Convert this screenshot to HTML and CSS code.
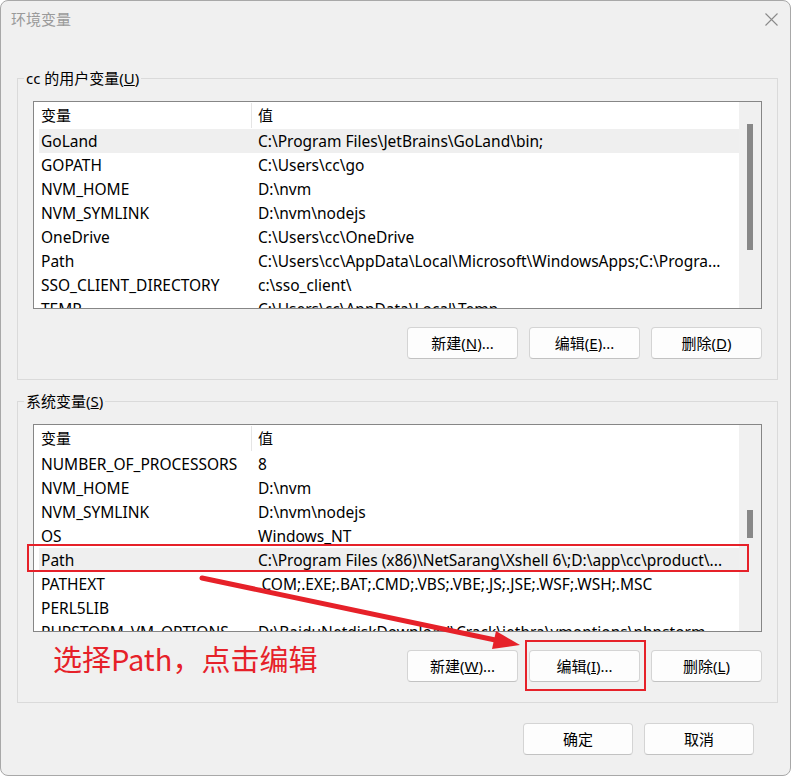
FILE: index.html
```
<!DOCTYPE html>
<html lang="zh-CN">
<head>
<meta charset="utf-8">
<title>环境变量</title>
<link rel="stylesheet" href="styles.css">
</head>
<body>
<div class="window">
  <div class="titlebar">
    <span class="title">环境变量</span>
    <svg class="close" width="13" height="13" viewBox="0 0 13 13"><path d="M0.5 0.5 L12.5 12.5 M12.5 0.5 L0.5 12.5" stroke="#8a8a8a" stroke-width="1.1" fill="none"/></svg>
  </div>
  <div class="content">
    <fieldset class="group">
      <legend>cc 的用户变量(<u>U</u>)</legend>
      <div class="list">
        <div class="table">
          <div class="row head"><div class="c1">变量</div><div class="c2">值</div></div>
          <div class="row sel"><div class="c1">GoLand</div><div class="c2">C:\Program Files\JetBrains\GoLand\bin;</div></div>
          <div class="row"><div class="c1">GOPATH</div><div class="c2">C:\Users\cc\go</div></div>
          <div class="row"><div class="c1">NVM_HOME</div><div class="c2">D:\nvm</div></div>
          <div class="row"><div class="c1">NVM_SYMLINK</div><div class="c2">D:\nvm\nodejs</div></div>
          <div class="row"><div class="c1">OneDrive</div><div class="c2">C:\Users\cc\OneDrive</div></div>
          <div class="row"><div class="c1">Path</div><div class="c2">C:\Users\cc\AppData\Local\Microsoft\WindowsApps;C:\Progra...</div></div>
          <div class="row"><div class="c1">SSO_CLIENT_DIRECTORY</div><div class="c2">c:\sso_client\</div></div>
          <div class="row"><div class="c1">TEMP</div><div class="c2">C:\Users\cc\AppData\Local\Temp</div></div>
        </div>
        <div class="scroll"><div class="thumb" style="margin-top:22px;height:126px"></div></div>
      </div>
      <div class="buttons">
        <button class="btn">新建(<u>N</u>)...</button>
        <button class="btn">编辑(<u>E</u>)...</button>
        <button class="btn">删除(<u>D</u>)</button>
      </div>
    </fieldset>

    <fieldset class="group sys">
      <legend>系统变量(<u>S</u>)</legend>
      <div class="list">
        <div class="table">
          <div class="row head"><div class="c1">变量</div><div class="c2">值</div></div>
          <div class="row"><div class="c1">NUMBER_OF_PROCESSORS</div><div class="c2">8</div></div>
          <div class="row"><div class="c1">NVM_HOME</div><div class="c2">D:\nvm</div></div>
          <div class="row"><div class="c1">NVM_SYMLINK</div><div class="c2">D:\nvm\nodejs</div></div>
          <div class="row"><div class="c1">OS</div><div class="c2">Windows_NT</div></div>
          <div class="row sel"><div class="c1">Path</div><div class="c2">C:\Program Files (x86)\NetSarang\Xshell 6\;D:\app\cc\product\...</div></div>
          <div class="row"><div class="c1">PATHEXT</div><div class="c2">.COM;.EXE;.BAT;.CMD;.VBS;.VBE;.JS;.JSE;.WSF;.WSH;.MSC</div></div>
          <div class="row"><div class="c1">PERL5LIB</div><div class="c2"></div></div>
          <div class="row"><div class="c1">PHPSTORM_VM_OPTIONS</div><div class="c2">D:\BaiduNetdiskDownload\Crack\jetbra\vmoptions\phpstorm</div></div>
        </div>
        <div class="scroll"><div class="thumb" style="margin-top:85px;height:28px"></div></div>
      </div>
      <div class="buttons">
        <button class="btn">新建(<u>W</u>)...</button>
        <button class="btn">编辑(<u>I</u>)...</button>
        <button class="btn">删除(<u>L</u>)</button>
      </div>
    </fieldset>

    <div class="footer">
      <button class="btn">确定</button>
      <button class="btn">取消</button>
    </div>
  </div>

  <div class="mark mark-row"></div>
  <div class="mark mark-btn"></div>
  <svg class="arrow" width="791" height="776" viewBox="0 0 791 776">
    <line x1="202" y1="578" x2="500" y2="641" stroke="#e62129" stroke-width="5" stroke-linecap="round"/>
    <polygon points="520,645 496,631 492,649" fill="#e62129"/>
  </svg>
  <div class="note">选择Path，点击编辑</div>
</div>
</body>
</html>
```
FILE: styles.css
```
* { box-sizing: border-box; }
html, body { margin: 0; padding: 0; background: #ffffff; }
body {
  font-family: "Noto Sans", "Noto Sans CJK SC", sans-serif;
  font-size: 15px;
  color: #000;
}
.window {
  position: relative;
  width: 791px;
  height: 776px;
  background: #f0f0f0;
  border: 1px solid #a8a8a8;
  border-radius: 8px;
  overflow: hidden;
}
.titlebar {
  height: 36px;
  display: flex;
  align-items: center;
  justify-content: space-between;
  padding: 0 12px 0 10px;
}
.title { color: #9a9a9a; font-size: 15px; line-height: 20px; }
.close { display: block; }
.content { padding: 31px 12px 0 16px; }
.group {
  margin: 0;
  padding: 0 15px 20px;
  border: 1px solid #dadada;
  min-width: 0;
}
.group.sys { margin-top: 11px; }
.group legend {
  padding: 0 2px;
  margin-left: -9px;
  line-height: 20px;
  font-size: 15px;
}
.list {
  margin-top: 13px;
  height: 208px;
  border: 1px solid #868686;
  background: #fff;
  display: flex;
  overflow: hidden;
}
.table { flex: 1; overflow: hidden; padding-left: 5px; }
.row {
  display: grid;
  grid-template-columns: 213px 1fr;
  height: 24px;
  line-height: 24px;
  white-space: nowrap;
  font-size: 15.5px;
}
.row .c1 { padding-left: 2px; overflow: hidden; }
.row .c2 { padding-left: 6px; overflow: hidden; }
.row.head { height: 27px; line-height: 26px; font-size: 15px; }
.row.head .c1 { border-right: 1px solid #e5e5e5; margin: 1px 0 1px; line-height: 24px; }
.row.sel { background: #efefef; }
.scroll { width: 22px; background: #f0f0f0; }
.thumb { width: 6px; margin-left: 8px; background: #888888; }
.buttons {
  margin-top: 18px;
  display: flex;
  justify-content: flex-end;
  gap: 11px;
}
.btn {
  width: 111px;
  height: 32px;
  padding: 0 0 1px;
  font-family: inherit;
  font-size: 15px;
  color: #000;
  background: #fdfdfd;
  border: 1px solid #d4d4d4;
  border-bottom-color: #c2c2c2;
  border-radius: 4px;
}
.footer {
  margin-top: 20px;
  display: flex;
  justify-content: flex-end;
  gap: 11px;
  padding-right: 24px;
}
.footer .btn { width: 110px; }
.mark {
  position: absolute;
  border: 2px solid #e62129;
}
.mark-row { left: 26px; top: 543px; width: 722px; height: 28px; }
.mark-btn { left: 524px; top: 639px; width: 121px; height: 51px; }
.arrow { position: absolute; left: -1px; top: -1px; pointer-events: none; }
.note {
  position: absolute;
  left: 52px;
  top: 638px;
  color: #e62129;
  font-family: "Noto Sans CJK SC", sans-serif;
  font-size: 29px;
  line-height: 38px;
}
```
